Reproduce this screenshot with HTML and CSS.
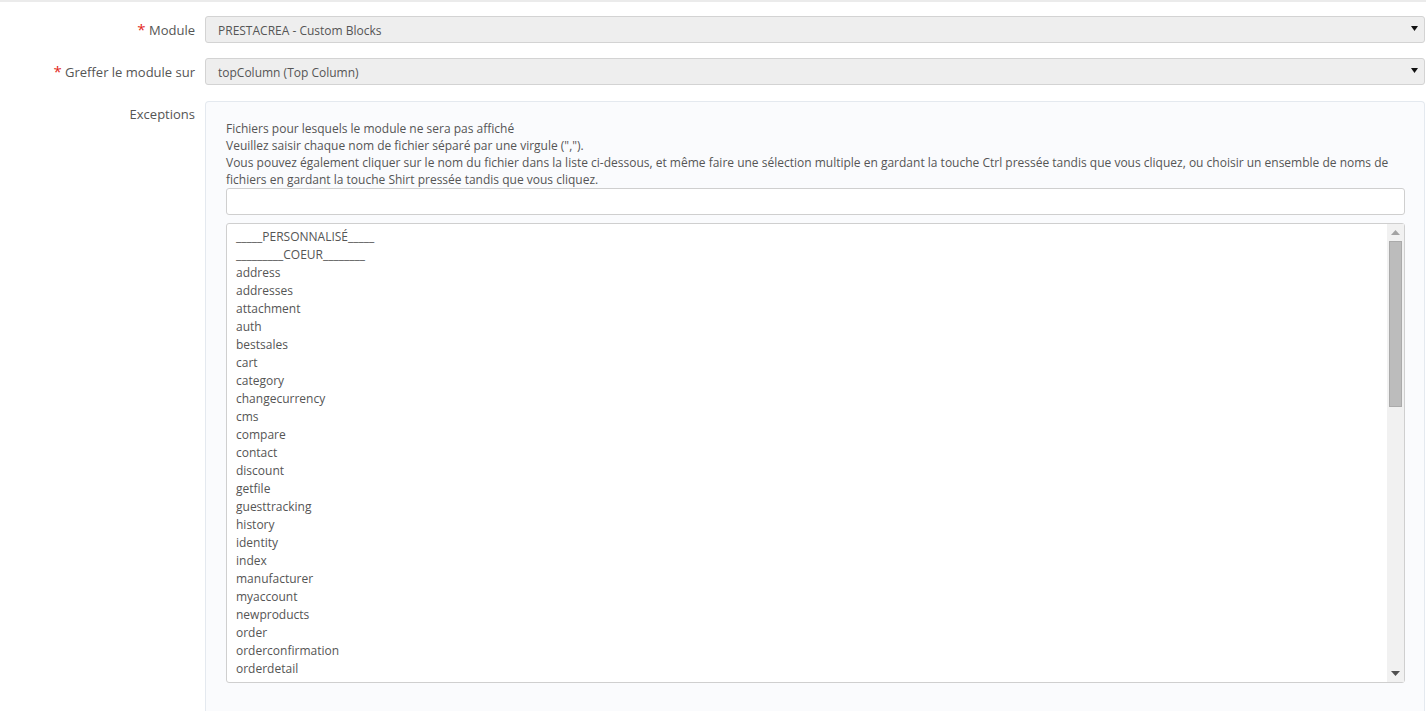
FILE: index.html
```html
<!DOCTYPE html>
<html lang="fr">
<head>
    <meta charset="UTF-8">
    <meta name="viewport" content="width=device-width, initial-scale=1.0">
    <title>Greffer un module</title>
    <link rel="stylesheet" href="styles.css">
</head>
<body>
    <form class="form">
        <!-- Module -->
        <div class="row">
            <label class="label"><span class="req">*</span> Module</label>
            <div class="select">
                <span>PRESTACREA - Custom Blocks</span>
                <svg class="caret" width="7" height="5" viewBox="0 0 7 5"><path d="M0 0h7L3.5 5z" fill="#111"/></svg>
            </div>
        </div>

        <!-- Hook -->
        <div class="row">
            <label class="label"><span class="req">*</span> Greffer le module sur</label>
            <div class="select">
                <span>topColumn (Top Column)</span>
                <svg class="caret" width="7" height="5" viewBox="0 0 7 5"><path d="M0 0h7L3.5 5z" fill="#111"/></svg>
            </div>
        </div>

        <!-- Exceptions -->
        <div class="row row-panel">
            <label class="label label-top">Exceptions</label>
            <div class="panel">
                <p class="help">
                    Fichiers pour lesquels le module ne sera pas affiché<br>
                    Veuillez saisir chaque nom de fichier séparé par une virgule (",").<br>
                    Vous pouvez également cliquer sur le nom du fichier dans la liste ci-dessous, et même faire une sélection multiple en gardant la touche Ctrl pressée tandis que vous cliquez, ou choisir un ensemble de noms de fichiers en gardant la touche Shirt pressée tandis que vous cliquez.
                </p>
                <input class="text" type="text">
                <div class="listbox">
                    <div class="options">
                        <div>_____PERSONNALISÉ_____</div>
                        <div>_________COEUR________</div>
                        <div>address</div>
                        <div>addresses</div>
                        <div>attachment</div>
                        <div>auth</div>
                        <div>bestsales</div>
                        <div>cart</div>
                        <div>category</div>
                        <div>changecurrency</div>
                        <div>cms</div>
                        <div>compare</div>
                        <div>contact</div>
                        <div>discount</div>
                        <div>getfile</div>
                        <div>guesttracking</div>
                        <div>history</div>
                        <div>identity</div>
                        <div>index</div>
                        <div>manufacturer</div>
                        <div>myaccount</div>
                        <div>newproducts</div>
                        <div>order</div>
                        <div>orderconfirmation</div>
                        <div>orderdetail</div>
                    </div>
                    <div class="scrollbar">
                        <svg class="arrow" width="9" height="5" viewBox="0 0 9 5"><path d="M0 5h9L4.5 0z" fill="#a3a3a3"/></svg>
                        <div class="track"><div class="thumb"></div></div>
                        <svg class="arrow" width="9" height="5" viewBox="0 0 9 5"><path d="M0 0h9L4.5 5z" fill="#505050"/></svg>
                    </div>
                </div>
            </div>
        </div>
    </form>
</body>
</html>
```

FILE: styles.css
```css
html, body {
    height: 100%;
    overflow: hidden;
}
body {
    margin: 0;
    box-sizing: border-box;
    background: #fff;
    border-top: 2px solid #ebebeb;
    font-family: "Open Sans", "Liberation Sans", sans-serif;
    font-size: 12px;
    color: #555;
}
.form {
    display: flex;
    flex-direction: column;
    gap: 15px;
    padding: 14px 1px 0 0;
}
.row {
    display: grid;
    grid-template-columns: 195px 1fr;
    column-gap: 10px;
    align-items: center;
}
.row-panel {
    margin-top: 1px;
}
.label {
    text-align: right;
    font-size: 13px;
    line-height: 18px;
}
.label-top {
    align-self: start;
    padding-top: 4px;
}
.req {
    color: #e3281c;
    font-size: 15px;
}
.select {
    box-sizing: border-box;
    height: 27px;
    display: flex;
    align-items: center;
    justify-content: space-between;
    padding: 1px 6px 0 12px;
    background: #eeeeee;
    border: 1px solid #d3d3d3;
    border-radius: 3px;
}
.caret {
    margin-top: -3px;
}
.panel {
    padding: 18px 19px 40px 20px;
    background: #fafbfd;
    border: 1px solid #e4e9ef;
    border-bottom: 0;
    border-radius: 4px 4px 0 0;
}
.help {
    margin: 0;
    line-height: 17px;
}
.text {
    display: block;
    box-sizing: border-box;
    width: 100%;
    height: 27px;
    margin: 0 0 8px;
    background: #fff;
    border: 1px solid #cfcfcf;
    border-radius: 3px;
}
.listbox {
    display: flex;
    background: #fff;
    border: 1px solid #cfcfcf;
    border-radius: 3px;
    line-height: 18px;
}
.options {
    flex: 1;
    padding: 4px 0 4px 9px;
}
.scrollbar {
    width: 17px;
    display: flex;
    flex-direction: column;
    align-items: center;
    background: #f1f1f1;
}
.arrow {
    margin: 6px 0;
}
.track {
    flex: 1;
    align-self: stretch;
    padding: 0 2px;
}
.thumb {
    height: 164px;
    background: #bcbcbc;
    border: 1px solid #aaaaaa;
}
```
